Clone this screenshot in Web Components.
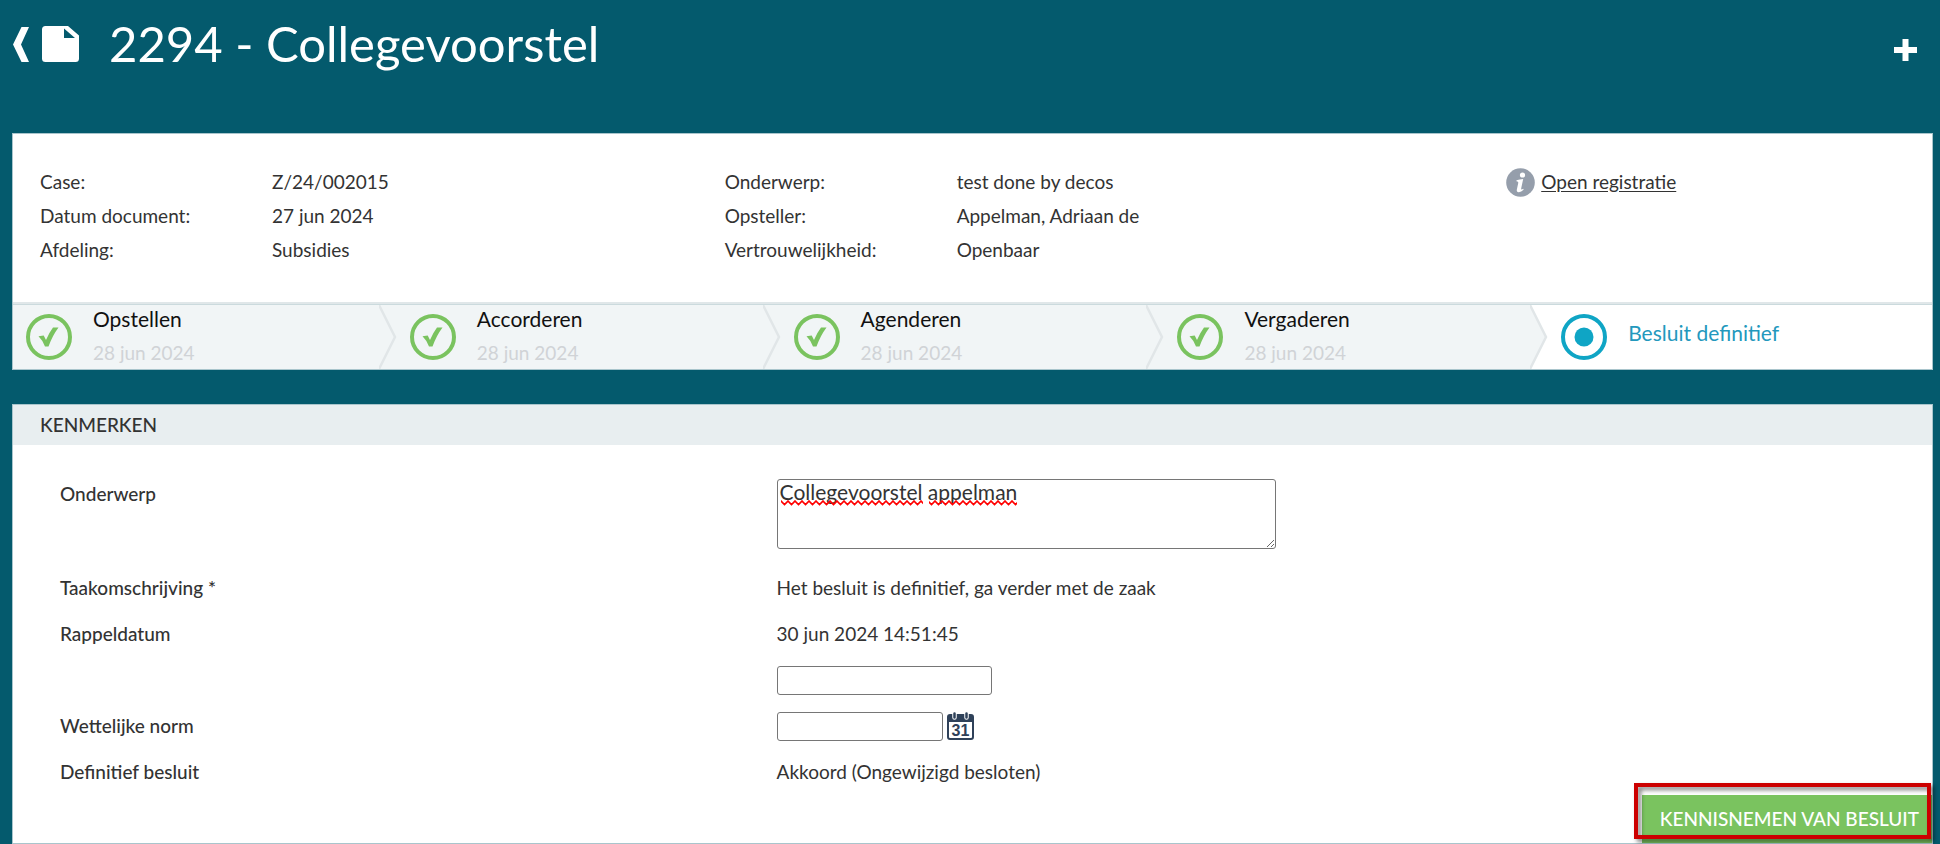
<!DOCTYPE html>
<html lang="nl">
<head>
<meta charset="utf-8">
<meta name="viewport" content="width=device-width, initial-scale=1">
<title>2294 - Collegevoorstel</title>
<style>
  html { background: #045a6d; }
  body {
    margin: 0;
    color: #333;
    font: 19px/34px Lato, "Open Sans", sans-serif;
  }
</style>
</head>
<body>
<case-page>
  <page-header slot="header">2294 - Collegevoorstel</page-header>

  <case-panel>
    <case-summary>
      <summary-item slot="first" label="Case:">Z/24/002015</summary-item>
      <summary-item slot="first" label="Datum document:">27 jun 2024</summary-item>
      <summary-item slot="first" label="Afdeling:">Subsidies</summary-item>
      <summary-item slot="second" label="Onderwerp:">test done by decos</summary-item>
      <summary-item slot="second" label="Opsteller:">Appelman, Adriaan de</summary-item>
      <summary-item slot="second" label="Vertrouwelijkheid:">Openbaar</summary-item>
      <info-link slot="third" href="#registratie">Open registratie</info-link>
    </case-summary>
    <step-bar>
      <step-item date="28 jun 2024">Opstellen</step-item>
      <step-item date="28 jun 2024">Accorderen</step-item>
      <step-item date="28 jun 2024">Agenderen</step-item>
      <step-item date="28 jun 2024">Vergaderen</step-item>
      <step-item current>Besluit definitief</step-item>
    </step-bar>
  </case-panel>

  <case-panel heading="Kenmerken">
    <field-list>
      <field-row top>
        <label slot="label" for="onderwerp">Onderwerp</label>
        <spell-mark><textarea id="onderwerp" spellcheck="false">Collegevoorstel appelman</textarea></spell-mark>
      </field-row>
      <field-row>
        <span slot="label">Taakomschrijving *</span>
        <span>Het besluit is definitief, ga verder met de zaak</span>
      </field-row>
      <field-row>
        <label slot="label" for="rappel">Rappeldatum</label>
        <span>30 jun 2024 14:51:45</span>
      </field-row>
      <field-row>
        <input id="rappel" type="text">
      </field-row>
      <field-row>
        <label slot="label" for="norm">Wettelijke norm</label>
        <input id="norm" class="date" type="text">
        <calendar-button></calendar-button>
      </field-row>
      <field-row>
        <span slot="label">Definitief besluit</span>
        <span>Akkoord (Ongewijzigd besloten)</span>
      </field-row>
    </field-list>
    <action-bar>
      <action-button>KENNISNEMEN VAN BESLUIT</action-button>
    </action-bar>
  </case-panel>
</case-page>

<script>
function define(name, render) {
  customElements.define(name, class extends HTMLElement {
    constructor() {
      super();
      this.attachShadow({ mode: 'open' });
    }
    connectedCallback() {
      this.shadowRoot.innerHTML = render(this);
    }
  });
}

define('case-page', () => `
  <style>
    :host { display: block; }
    main { display: grid; gap: 34px; padding: 0 7px 0 12px; }
  </style>
  <slot name="header"></slot>
  <main><slot></slot></main>`);

define('page-header', () => `
  <style>
    :host { display: block; color: #fff; }
    header { display: flex; align-items: flex-start; padding: 13px 23px 60px 13px; }
    h1 { flex: 1; margin: 0 0 0 30px; font-size: 49px; line-height: 60px; font-weight: 400; }
    a, button { display: block; color: inherit; padding: 0; border: 0; background: none; }
    a { margin-top: 14px; }
    button { margin-top: 26px; }
    .doc { margin: 13px 0 0 13px; }
    svg { display: block; }
  </style>
  <header>
    <a href="#terug" aria-label="Terug">
      <svg width="16" height="35" viewBox="0 0 16 35"><path fill="currentColor" d="M8.500 0H16L8 17.500 16 35H8.500L0 17.500z"/></svg>
    </a>
    <svg class="doc" width="37" height="36" viewBox="0 0 37 36">
      <path fill="currentColor" fill-rule="evenodd" d="M3.500 0H26L37 9.500V32.500a3.500 3.500 0 0 1-3.500 3.500H3.500a3.500 3.500 0 0 1-3.500-3.500V3.500a3.500 3.500 0 0 1 3.500-3.500zM22 2.500V12H33z"/>
    </svg>
    <h1><slot></slot></h1>
    <button type="button" aria-label="Toevoegen">
      <svg width="23" height="22" viewBox="0 0 23 22"><path fill="currentColor" d="M8.500 0h6v8H23v6h-8.500v8h-6v-8H0V8h8.500z"/></svg>
    </button>
  </header>`);

define('case-panel', el => {
  const heading = el.getAttribute('heading');
  return `
  <style>
    :host { display: block; background: #fff; border: 1px solid #a9c5cc; }
    h2 {
      margin: 0; padding: 0 27px; background: #e8eef0; color: #333;
      font-size: 19px; line-height: 40px; font-weight: 500; text-transform: uppercase;
    }
  </style>
  <section>${heading ? `<h2>${heading}</h2>` : ''}<slot></slot></section>`;
});

define('case-summary', () => `
  <style>
    :host {
      display: grid; grid-template-columns: 685fr 782fr 426fr;
      padding: 31px 0 35px 27px; border-bottom: 2px solid #e0e7e9;
    }
  </style>
  <div><slot name="first"></slot></div>
  <div><slot name="second"></slot></div>
  <div><slot name="third"></slot></div>`);

define('summary-item', el => `
  <style>
    :host { display: block; }
    dl { display: grid; grid-template-columns: 232px 1fr; margin: 0; }
    dd { margin: 0; }
  </style>
  <dl><dt>${el.getAttribute('label')}</dt><dd><slot></slot></dd></dl>`);

define('info-link', el => `
  <style>
    :host { display: flex; align-items: center; gap: 6px; }
    a { color: inherit; text-underline-offset: 2px; }
  </style>
  <svg width="29" height="29" viewBox="0 0 29 29" aria-hidden="true">
    <circle cx="14.500" cy="14.500" r="14.300" fill="#959eab"/>
    <circle cx="16.500" cy="7" r="2.600" fill="#fff"/>
    <path fill="#fff" d="M10.500 12.200q3-.7 6.700-1.200l-2 9.300q-.3 1.500.6 1.300l1.500-.8.300 1q-2.500 2.500-4.900 2.400-2.300-.2-1.900-2.500l1.500-7q.2-1.100-1.800-1.400z"/>
  </svg>
  <a href="${el.getAttribute('href')}"><slot></slot></a>`);

define('step-bar', () => `
  <style>
    :host { display: block; border-top: 1px solid #cbdadd; }
    nav { display: grid; grid-auto-flow: column; grid-auto-columns: 1fr; background: #f1f5f6; }
  </style>
  <nav aria-label="Voortgang"><slot></slot></nav>`);

define('step-item', el => {
  const current = el.hasAttribute('current');
  const icon = current
    ? `<circle cx="24" cy="24" r="21" fill="none" stroke="#0fa5c5" stroke-width="4"/><circle cx="24" cy="24" r="9.500" fill="#0fa5c5"/>`
    : `<circle cx="24" cy="24" r="21" fill="none" stroke="#7ac35f" stroke-width="4"/><path fill="#7ac35f" d="M13.500 23.200l5.200-.7 2.300 4.500Q24.500 19 28 14.500H33.500Q27.500 22.500 23.500 33.500H20Q17.500 27 13.500 23.200z"/>`;
  return `
  <style>
    :host { display: flex; align-items: center; height: 64px; ${current ? 'background: #fff;' : ''} }
    .icon { flex: none; margin: 0 20px 0 12px; }
    .text {
      flex: 1; display: grid; gap: 4px; font-size: 21px; line-height: 28px;
      color: ${current ? '#2398bd' : '#111'}; ${current ? 'padding-bottom: 8px;' : ''}
    }
    .date { font-size: 19px; line-height: 32px; color: #d0d3d6; }
    .arrow { flex: none; }
  </style>
  <svg class="icon" width="48" height="48" viewBox="0 0 48 48" aria-hidden="true">${icon}</svg>
  <div class="text"><div><slot></slot></div>${current ? '' : `<div class="date">${el.getAttribute('date')}</div>`}</div>
  ${current ? '' : `<svg class="arrow" width="18" height="64" viewBox="0 0 18 64" aria-hidden="true">
    <path d="M0 0L16 32 0 64H18V0z" fill="${el.nextElementSibling && el.nextElementSibling.hasAttribute('current') ? '#fff' : '#f1f5f6'}"/>
    <path d="M0 0L16 32 0 64" fill="none" stroke="#e1e6e8" stroke-width="2.500"/></svg>`}`;
});

define('field-list', () => `
  <style>
    :host { display: block; padding: 34px 47px 0; }
  </style>
  <slot></slot>`);

define('field-row', el => `
  <style>
    :host {
      display: grid; grid-template-columns: 717fr 1109fr; align-items: center;
      ${el.hasAttribute('top') ? 'align-items: start; margin-bottom: 16px; line-height: 30px;' : 'min-height: 46px;'}
    }
    .label { font-weight: 500; }
    .value { display: flex; align-items: center; gap: 4px; }
    ::slotted(input) {
      box-sizing: border-box; width: 215px; height: 29px; margin: 0; padding: 0 4px;
      border: 1px solid #767676; border-radius: 3px; font: inherit; color: inherit;
    }
    ::slotted(input.date) { width: 166px; }
  </style>
  <div class="label"><slot name="label"></slot></div>
  <div class="value"><slot></slot></div>`);

define('spell-mark', () => `
  <style>
    :host { display: block; position: relative; }
    ::slotted(textarea) {
      display: block; box-sizing: border-box; width: 499px; height: 70px; margin: 0; padding: 0 2px;
      border: 1px solid #767676; border-radius: 3px; background: #fff; color: inherit;
      font-family: inherit; font-size: 21px; line-height: 24px;
    }
    svg { position: absolute; left: 4px; top: 21px; pointer-events: none; }
  </style>
  <slot></slot>
  <svg width="236" height="6" aria-hidden="true">
    <defs><pattern id="wave" width="7" height="6" patternUnits="userSpaceOnUse">
      <path d="M-3.500 4.500L0 1 3.500 4.500 7 1 10.500 4.500" fill="none" stroke="#f00" stroke-width="1.600"/>
    </pattern></defs>
    <rect width="142" height="6" fill="url(#wave)"/>
    <rect x="148" width="88" height="6" fill="url(#wave)"/>
  </svg>`);

define('calendar-button', () => `
  <style>
    :host { display: block; }
    button { display: block; padding: 0; border: 0; background: none; }
    svg { display: block; }
    text { font: 700 16px "Liberation Sans", Arial, sans-serif; }
  </style>
  <button type="button" aria-label="Kies datum">
    <svg width="27" height="28" viewBox="0 0 27 28">
      <rect x="1" y="3" width="25" height="24" rx="2" fill="#fff" stroke="#2f4159" stroke-width="2"/>
      <path d="M1 3h25v7H1z" fill="#2f4159"/>
      <path d="M7.500 1.500v4M19.500 1.500v4" stroke="#fff" stroke-width="4.500" stroke-linecap="round"/>
      <path d="M7.500 1.500v4M19.500 1.500v4" stroke="#2f4159" stroke-width="2.500" stroke-linecap="round"/>
      <text x="13.500" y="24" text-anchor="middle" fill="#2f4159">31</text>
    </svg>
  </button>`);

define('action-bar', () => `
  <style>
    :host { display: flex; justify-content: flex-end; }
  </style>
  <slot></slot>`);

define('action-button', () => `
  <style>
    :host { display: block; position: relative; }
    button {
      display: block; height: 48px; padding: 0 13px 0 18px; border: 0;
      background: #7ac35f; color: #fff; font: 500 19px/44px Lato, "Open Sans", sans-serif;
    }
    .frame {
      position: absolute; inset: -12px 1px 4px -8px; pointer-events: none;
      border: 4px solid #c00;
      filter: drop-shadow(3px 3px 2px rgba(0, 0, 0, .5));
    }
  </style>
  <button type="button"><slot></slot></button>
  <div class="frame"></div>`);
</script>
</body>
</html>
